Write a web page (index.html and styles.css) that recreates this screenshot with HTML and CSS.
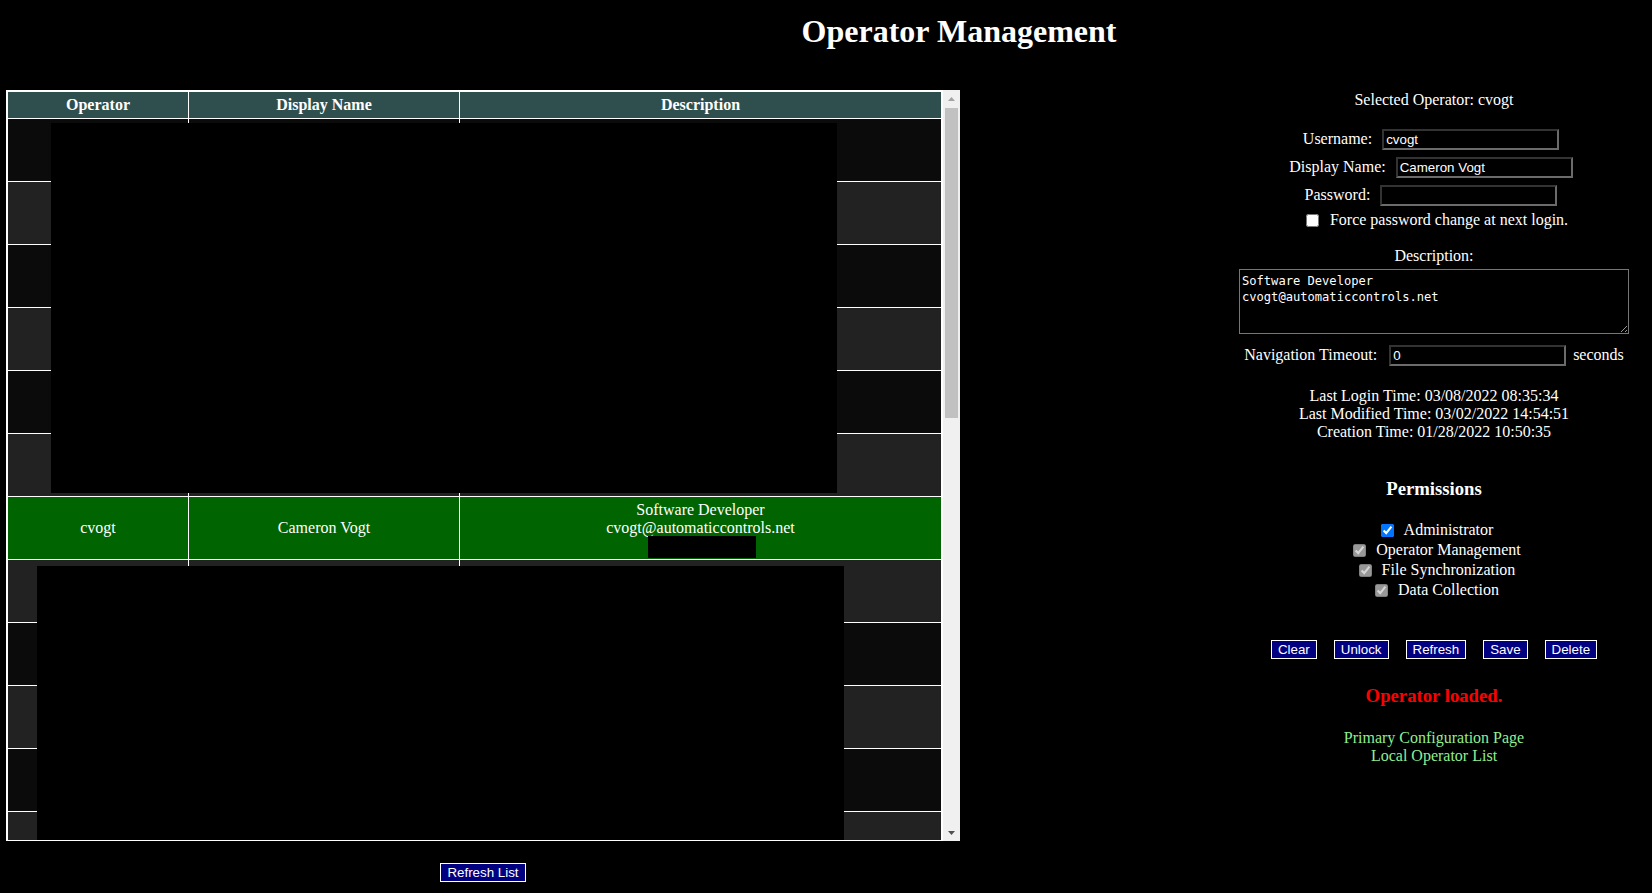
FILE: index.html
```html
<!DOCTYPE html>
<html lang="en">
<head>
<meta charset="utf-8">
<title>Operator Management</title>
<link rel="stylesheet" href="styles.css">
</head>
<body>
<h1 class="title">Operator Management</h1>
<div class="main">
  <section class="list-col">
    <div class="list-frame">
      <div class="list-view">
        <div class="table">
          <div class="row head"><div class="cell">Operator</div><div class="cell">Display Name</div><div class="cell">Description</div></div>
          <div class="row dark"><div class="cell"></div><div class="cell"></div><div class="cell"></div></div>
          <div class="row light"><div class="cell"></div><div class="cell"></div><div class="cell"></div></div>
          <div class="row dark"><div class="cell"></div><div class="cell"></div><div class="cell"></div></div>
          <div class="row light"><div class="cell"></div><div class="cell"></div><div class="cell"></div></div>
          <div class="row dark"><div class="cell"></div><div class="cell"></div><div class="cell"></div></div>
          <div class="row light"><div class="cell"></div><div class="cell"></div><div class="cell"></div></div>
          <div class="row selected"><div class="cell">cvogt</div><div class="cell">Cameron Vogt</div><div class="cell"><span>Software Developer</span><span>cvogt@automaticcontrols.net</span><span>&nbsp;</span></div></div>
          <div class="row light"><div class="cell"></div><div class="cell"></div><div class="cell"></div></div>
          <div class="row dark"><div class="cell"></div><div class="cell"></div><div class="cell"></div></div>
          <div class="row light"><div class="cell"></div><div class="cell"></div><div class="cell"></div></div>
          <div class="row dark"><div class="cell"></div><div class="cell"></div><div class="cell"></div></div>
          <div class="row light"><div class="cell"></div><div class="cell"></div><div class="cell"></div></div>
        </div>
        <div class="redact redact-a"></div>
        <div class="redact redact-b"></div>
        <div class="redact redact-c"></div>
      </div>
      <div class="scrollbar">
        <div class="sb-btn"><svg width="7" height="4" viewBox="0 0 7 4"><path d="M0 4 L3.5 0 L7 4 Z" fill="#a3a3a3"/></svg></div>
        <div class="sb-thumb"></div>
        <div class="sb-space"></div>
        <div class="sb-btn"><svg width="7" height="4" viewBox="0 0 7 4"><path d="M0 0 L3.5 4 L7 0 Z" fill="#505050"/></svg></div>
      </div>
    </div>
    <div class="list-actions"><button class="btn" type="button">Refresh List</button></div>
  </section>

  <aside class="editor">
    <div class="selected-op">Selected Operator: cvogt</div>
    <div class="fields">
      <div class="field"><label for="username">Username:</label><input id="username" type="text" value="cvogt"></div>
      <div class="field"><label for="displayname">Display Name:</label><input id="displayname" type="text" value="Cameron Vogt"></div>
      <div class="field"><label for="password">Password:</label><input id="password" type="password" value=""></div>
    </div>
    <div class="check-row force"><input type="checkbox" id="force"><label for="force">Force password change at next login.</label></div>
    <div class="desc-label">Description:</div>
    <textarea class="desc">Software Developer
cvogt@automaticcontrols.net</textarea>
    <div class="field nav"><label for="timeout">Navigation Timeout:</label><input id="timeout" type="text" value="0"><span class="unit">seconds</span></div>
    <div class="times">
      <div>Last Login Time: 03/08/2022 08:35:34</div>
      <div>Last Modified Time: 03/02/2022 14:54:51</div>
      <div>Creation Time: 01/28/2022 10:50:35</div>
    </div>
    <h3 class="perm-title">Permissions</h3>
    <div class="perms">
      <div class="check-row"><input type="checkbox" id="p-admin" checked><label for="p-admin">Administrator</label></div>
      <div class="check-row"><input type="checkbox" id="p-opm" checked disabled><label for="p-opm">Operator Management</label></div>
      <div class="check-row"><input type="checkbox" id="p-fs" checked disabled><label for="p-fs">File Synchronization</label></div>
      <div class="check-row"><input type="checkbox" id="p-dc" checked disabled><label for="p-dc">Data Collection</label></div>
    </div>
    <div class="actions">
      <button class="btn" type="button">Clear</button>
      <button class="btn" type="button">Unlock</button>
      <button class="btn" type="button">Refresh</button>
      <button class="btn" type="button">Save</button>
      <button class="btn" type="button">Delete</button>
    </div>
    <div class="status">Operator loaded.</div>
    <div class="links">
      <a href="#">Primary Configuration Page</a>
      <a href="#">Local Operator List</a>
    </div>
  </aside>
</div>
</body>
</html>
```

FILE: styles.css
```css
* { box-sizing: border-box; }

html, body {
  margin: 0;
  padding: 0;
  background: #000;
  color: #fff;
  font-family: "Liberation Serif", "Times New Roman", serif;
  font-size: 16px;
}

body { overflow: hidden; }

.title {
  margin: 0;
  padding: 13px 0 0 266px;
  font-size: 32px;
  font-weight: bold;
  line-height: 37px;
  text-align: center;
}

.main {
  display: flex;
  align-items: flex-start;
  margin-top: 40px;
}

/* ---------- list ---------- */
.list-col {
  margin-left: 6px;
  width: 954px;
}

.list-frame {
  display: flex;
  height: 751px;
}

.list-view {
  position: relative;
  width: 937px;
  height: 751px;
  overflow: hidden;
  border-bottom: 1px solid #fff;
}

.table {
  width: 937px;
  display: flex;
  flex-direction: column;
  gap: 1px;
  background: #fff;
  border: 2px solid #fff;
  border-bottom: 0;
}

.row {
  display: grid;
  grid-template-columns: 180px 270px 481px;
  column-gap: 1px;
}

.cell {
  height: 62px;
  display: flex;
  flex-direction: column;
  align-items: center;
  justify-content: center;
  text-align: center;
  line-height: 18px;
}

.row.head .cell {
  height: 26px;
  background: #2f4f4f;
  font-weight: bold;
}

.row.dark .cell { background: #0b0b0b; }
.row.light .cell { background: #222; }
.row.selected .cell { background: #006400; }

.redact {
  position: absolute;
  background: #000;
}
.redact-a { left: 45px; top: 33px; width: 786px; height: 370px; }
.redact-b { left: 31px; top: 476px; width: 807px; height: 290px; }
.redact-c { left: 642px; top: 446px; width: 108px; height: 22px; }

.scrollbar {
  width: 17px;
  height: 751px;
  background: #f0f0f0;
  display: flex;
  flex-direction: column;
  align-items: center;
}

.sb-btn {
  width: 17px;
  height: 17px;
  display: flex;
  align-items: center;
  justify-content: center;
}

.sb-thumb {
  width: 13px;
  height: 310px;
  margin-top: 1px;
  background: #c1c1c1;
}

.sb-space { flex: 1; }

.list-actions {
  margin-top: 22px;
  display: flex;
  justify-content: center;
}

/* ---------- buttons ---------- */
.btn {
  margin: 0;
  height: 19px;
  padding: 0 6px;
  background: #000080;
  color: #fff;
  border: 1px solid #fff;
  border-radius: 0;
  font-family: "Liberation Sans", Arial, sans-serif;
  font-size: 13.33px;
  line-height: 15px;
}

/* ---------- editor ---------- */
.editor {
  margin-left: 256px;
  width: 436px;
  display: flex;
  flex-direction: column;
  align-items: center;
  text-align: center;
  line-height: 18px;
}

.selected-op {
  height: 18px;
  margin-top: 1px;
}

.fields {
  margin-top: 20px;
  display: flex;
  flex-direction: column;
  gap: 7px;
}

.field {
  display: flex;
  justify-content: center;
  align-items: center;
  gap: 10px;
  height: 21px;
  padding-right: 6px;
}

.field label { position: relative; top: -1px; }

.field input {
  margin: 0;
  width: 177px;
  height: 21px;
  padding: 0 2px;
  background: #000;
  color: #fff;
  border: 2px solid;
  border-color: #333 #6b6b6b #6b6b6b #333;
  font-family: "Liberation Sans", Arial, sans-serif;
  font-size: 13.33px;
  outline: none;
}

.check-row {
  display: flex;
  justify-content: center;
  align-items: center;
  gap: 10px;
  height: 20px;
  padding-left: 6px;
}

.check-row input {
  margin: 0;
  width: 13px;
  height: 13px;
}

.force {
  margin-top: 5px;
  height: 18px;
  gap: 11px;
}

.desc-label { margin-top: 18px; }

.desc {
  display: block;
  margin-top: 4px;
  width: 390px;
  height: 65px;
  padding: 3px 2px 2px;
  background: #000;
  color: #fff;
  border: 1px solid #767676;
  border-radius: 0;
  font-family: "DejaVu Sans Mono", "Liberation Mono", monospace;
  font-size: 12.1px;
  line-height: 16px;
  text-align: left;
  resize: both;
}

.nav {
  margin-top: 11px;
  gap: 0;
  padding-right: 0;
}
.nav input { margin: 0 7px 0 12px; }
.nav .unit { position: relative; top: -1px; }

.times { margin-top: 21px; }

.perm-title {
  margin: 37px 0 0;
  font-size: 18.72px;
  line-height: 22px;
  font-weight: bold;
}

.perms { margin-top: 20px; }

.actions {
  margin-top: 40px;
  display: flex;
  gap: 17px;
}

.status {
  margin-top: 26px;
  color: #f00;
  font-size: 18.72px;
  font-weight: bold;
  line-height: 22px;
}

.links {
  margin-top: 22px;
  display: flex;
  flex-direction: column;
  align-items: center;
}

.links a {
  color: #90ee90;
  text-decoration: none;
}
```
